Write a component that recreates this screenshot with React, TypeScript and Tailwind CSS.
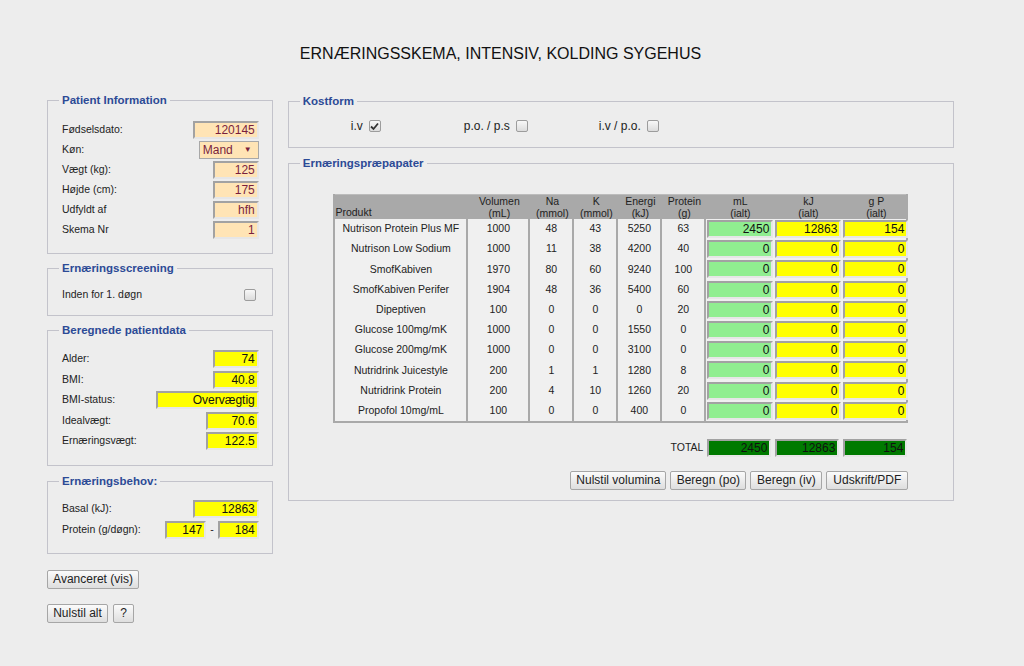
import React from "react";

const products: [string, string, string, string, string, string, string, string, string][] = [
  ["Nutrison Protein Plus MF", "1000", "48", "43", "5250", "63", "2450", "12863", "154"],
  ["Nutrison Low Sodium", "1000", "11", "38", "4200", "40", "0", "0", "0"],
  ["SmofKabiven", "1970", "80", "60", "9240", "100", "0", "0", "0"],
  ["SmofKabiven Perifer", "1904", "48", "36", "5400", "60", "0", "0", "0"],
  ["Dipeptiven", "100", "0", "0", "0", "20", "0", "0", "0"],
  ["Glucose 100mg/mK", "1000", "0", "0", "1550", "0", "0", "0", "0"],
  ["Glucose 200mg/mK", "1000", "0", "0", "3100", "0", "0", "0", "0"],
  ["Nutridrink Juicestyle", "200", "1", "1", "1280", "8", "0", "0", "0"],
  ["Nutridrink Protein", "200", "4", "10", "1260", "20", "0", "0", "0"],
  ["Propofol 10mg/mL", "100", "0", "0", "400", "0", "0", "0", "0"],
];

const cols = "grid grid-cols-[133px_62px_44px_44px_44px_44px_68px_68px_68px]";

// inset-looking input box
const box =
  "h-[18px] border-2 border-t-[#a2a2a2] border-l-[#a2a2a2] border-b-[#e6e6e6] border-r-[#e6e6e6] text-right pr-[2px] text-[12px] leading-[14px]";

function Field({ value, w, bg, color }: { value: string; w: string; bg: string; color: string }) {
  return <div className={`${box} ${w} ${bg} ${color}`}>{value}</div>;
}

function Peach({ value, w = "w-[46px]" }: { value: string; w?: string }) {
  return <Field value={value} w={w} bg="bg-[#ffe4b5]" color="text-[#7a1f3d]" />;
}

function Yellow({ value, w = "w-[46px]" }: { value: string; w?: string }) {
  return <Field value={value} w={w} bg="bg-[#ffff00]" color="text-[#111]" />;
}

function Check({ checked = false }: { checked?: boolean }) {
  return (
    <span className="inline-flex w-[12px] h-[12px] rounded-[2px] border border-[#9c9c9c] bg-gradient-to-b from-[#f8f8f8] to-[#dcdcdc] items-center justify-center">
      {checked && (
        <svg width="9" height="9" viewBox="0 0 9 9">
          <path d="M1 4.5 L3.5 7 L8 1.5" fill="none" stroke="#333" strokeWidth="1.8" />
        </svg>
      )}
    </span>
  );
}

function Btn({ children, w }: { children: React.ReactNode; w: string }) {
  return (
    <button className={`${w} h-[19px] rounded-[2px] border border-[#a6a6a6] bg-gradient-to-b from-[#fbfbfb] to-[#dedede] text-[12px] leading-[15px] text-[#222]`}>
      {children}
    </button>
  );
}

function Box({ title, children, className = "" }: { title: string; children: React.ReactNode; className?: string }) {
  return (
    <fieldset className={`border border-[#c3c3cb] pl-[14px] pr-[13px] ${className}`}>
      <legend className="-ml-[3px] px-[3px] text-[11.5px] leading-[14px] font-bold text-[#2c4a96]">{title}</legend>
      {children}
    </fieldset>
  );
}

function Row({ label, children }: { label: string; children: React.ReactNode }) {
  return (
    <div className="flex h-[18px] items-center justify-between">
      <span>{label}</span>
      {children}
    </div>
  );
}

export default function App() {
  return (
    <div className="min-h-[666px] bg-[#ededed] text-[10.5px] text-[#222] font-['Liberation_Sans',Arial,sans-serif]">
      <div className="ml-[47px] w-[907px] pt-[44px]">
        <h1 className="text-center text-[16px] leading-[20px] text-[#111]">
          ERNÆRINGSSKEMA, INTENSIV, KOLDING SYGEHUS
        </h1>

        <div className="mt-[29px] flex gap-[15px]">
          {/* left column */}
          <div className="w-[226px] flex flex-col">
            <Box title="Patient Information" className="pt-[14px] pb-[14px]">
              <div className="flex flex-col gap-[2px]">
                <Row label="Fødselsdato:"><Peach value="120145" w="w-[66px]" /></Row>
                <Row label="Køn:">
                  <div className="w-[60px] h-[18px] border border-[#a8a8a8] bg-[#ffe4b5] text-[#7a1f3d] text-[12px] leading-[16px] pl-[3px] flex items-center justify-between pr-[6px]">
                    <span>Mand</span>
                    <span className="text-[8px]">▼</span>
                  </div>
                </Row>
                <Row label="Vægt (kg):"><Peach value="125" /></Row>
                <Row label="Højde (cm):"><Peach value="175" /></Row>
                <Row label="Udfyldt af"><Peach value="hfh" /></Row>
                <Row label="Skema Nr"><Peach value="1" /></Row>
              </div>
            </Box>

            <Box title="Ernæringsscreening" className="mt-[7px] pt-[11px] pb-[11px]">
              <div className="flex h-[18px] items-center justify-between pr-[3px]">
                <span>Inden for 1. døgn</span>
                <Check />
              </div>
            </Box>

            <Box title="Beregnede patientdata" className="mt-[7px] pt-[13px] pb-[15px]">
              <div className="flex flex-col gap-[2.5px]">
                <Row label="Alder:"><Yellow value="74" /></Row>
                <Row label="BMI:"><Yellow value="40.8" /></Row>
                <Row label="BMI-status:"><Yellow value="Overvægtig" w="w-[103px]" /></Row>
                <Row label="Idealvægt:"><Yellow value="70.6" w="w-[53px]" /></Row>
                <Row label="Ernæringsvægt:"><Yellow value="122.5" w="w-[53px]" /></Row>
              </div>
            </Box>

            <Box title="Ernæringsbehov:" className="mt-[8px] pt-[12px] pb-[14px]">
              <div className="flex flex-col gap-[3px]">
                <Row label="Basal (kJ):"><Yellow value="12863" w="w-[66px]" /></Row>
                <Row label="Protein (g/døgn):">
                  <div className="flex items-center gap-[4px]">
                    <Yellow value="147" w="w-[41px]" />
                    <span>-</span>
                    <Yellow value="184" w="w-[41px]" />
                  </div>
                </Row>
              </div>
            </Box>

            <div className="mt-[16px]">
              <Btn w="w-[92px]">Avanceret (vis)</Btn>
            </div>
            <div className="mt-[15px] flex gap-[5px]">
              <Btn w="w-[61px]">Nulstil alt</Btn>
              <Btn w="w-[21px]">?</Btn>
            </div>
          </div>

          {/* right column */}
          <div className="w-[667px] flex flex-col pt-[1px]">
            <Box title="Kostform" className="pt-[9px] pb-[12px]">
              <div className="flex h-[18px] items-center text-[12px]">
                <div className="w-[78px] flex justify-end items-center gap-[6px]">
                  <span>i.v</span>
                  <Check checked />
                </div>
                <div className="w-[147px] flex justify-end items-center gap-[6px]">
                  <span>p.o. / p.s</span>
                  <Check />
                </div>
                <div className="w-[131px] flex justify-end items-center gap-[6px]">
                  <span>i.v / p.o.</span>
                  <Check />
                </div>
              </div>
            </Box>

            <Box title="Ernæringspræpapater" className="mt-[8px] pt-[24px] pb-[10px]">
              <div className="flex flex-col items-center pr-[1px]">
                <div className="w-[575px]">
                  <div className="border-l-2 border-b-2 border-r-2 border-[#a9a9a9] bg-[#f0f0f0]">
                    <div className={`${cols} h-[25px] bg-[#a9a9a9] text-[#222] leading-[12px] text-center border-t border-[#bcbcbc]`}>
                      <div className="flex items-end text-left pb-[1px]">Produkt</div>
                      <div className="flex flex-col items-center justify-end"><span>Volumen</span><span>(mL)</span></div>
                      <div className="flex flex-col items-center justify-end"><span>Na</span><span>(mmol)</span></div>
                      <div className="flex flex-col items-center justify-end"><span>K</span><span>(mmol)</span></div>
                      <div className="flex flex-col items-center justify-end"><span>Energi</span><span>(kJ)</span></div>
                      <div className="flex flex-col items-center justify-end"><span>Protein</span><span>(g)</span></div>
                      <div className="flex flex-col items-center justify-end"><span>mL</span><span>(ialt)</span></div>
                      <div className="flex flex-col items-center justify-end"><span>kJ</span><span>(ialt)</span></div>
                      <div className="flex flex-col items-center justify-end"><span>g P</span><span>(ialt)</span></div>
                    </div>
                    {products.map((p) => (
                      <div key={p[0]} className={`${cols} h-[20.2px] items-stretch text-[#222]`}>
                        <div className="flex items-center justify-center border-r-2 border-[#a9a9a9]">{p[0]}</div>
                        <div className="flex items-center justify-center border-r-2 border-[#a9a9a9]">{p[1]}</div>
                        <div className="flex items-center justify-center border-r-2 border-[#a9a9a9]">{p[2]}</div>
                        <div className="flex items-center justify-center border-r-2 border-[#a9a9a9]">{p[3]}</div>
                        <div className="flex items-center justify-center border-r-2 border-[#a9a9a9]">{p[4]}</div>
                        <div className="flex items-center justify-center border-r-2 border-[#a9a9a9]">{p[5]}</div>
                        <div className="flex items-center pl-[1px]"><Field value={p[6]} w="w-[66px]" bg="bg-[#90ee90]" color="text-[#111]" /></div>
                        <div className="flex items-center pl-[1px]"><Field value={p[7]} w="w-[66px]" bg="bg-[#ffff00]" color="text-[#111]" /></div>
                        <div className="flex items-center pl-[1px]"><Field value={p[8]} w="w-[65px]" bg="bg-[#ffff00]" color="text-[#111]" /></div>
                      </div>
                    ))}
                  </div>

                  <div className={`${cols} mt-[16px] h-[18px] items-center`}>
                    <div className="col-span-6 text-right pr-[1px] text-[#222]">TOTAL</div>
                    <div className="pl-[3px]"><Field value="2450" w="w-[64px]" bg="bg-[#007a00]" color="text-[#111]" /></div>
                    <div className="pl-[3px]"><Field value="12863" w="w-[64px]" bg="bg-[#007a00]" color="text-[#111]" /></div>
                    <div className="pl-[3px]"><Field value="154" w="w-[64px]" bg="bg-[#007a00]" color="text-[#111]" /></div>
                  </div>

                  <div className="mt-[14px] flex justify-end gap-[4px]">
                    <Btn w="w-[96px]">Nulstil volumina</Btn>
                    <Btn w="w-[76px]">Beregn (po)</Btn>
                    <Btn w="w-[72px]">Beregn (iv)</Btn>
                    <Btn w="w-[82px]">Udskrift/PDF</Btn>
                  </div>
                </div>
              </div>
            </Box>
          </div>
        </div>
      </div>
    </div>
  );
}
